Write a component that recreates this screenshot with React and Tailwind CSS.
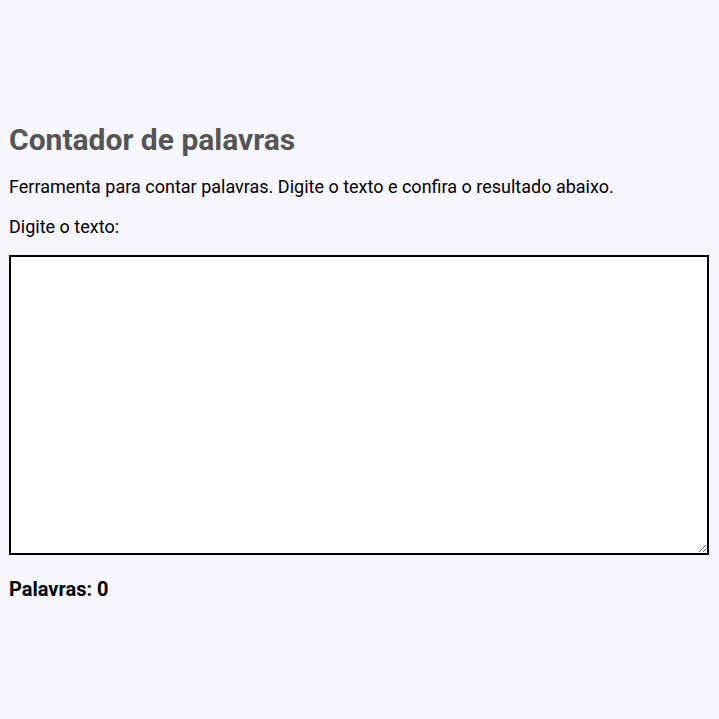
import React, { useState } from "react";

export default function App() {
  const [text, setText] = useState("");
  const words = text.trim() ? text.trim().split(/\s+/).length : 0;

  return (
    <main className="min-h-screen bg-[#f8f6fe] px-[9px] pt-[122px] font-['Roboto',sans-serif] text-black">
      <h2 className="text-[30px] leading-[36px] font-bold text-[#555555]">
        Contador de palavras
      </h2>
      <p className="mt-[18px] text-[18px] leading-[21px]">
        Ferramenta para contar palavras. Digite o texto e confira o resultado
        abaixo.
      </p>
      <p className="mt-[19px] text-[18px] leading-[21px]">Digite o texto:</p>
      <textarea
        autoFocus
        value={text}
        onChange={(e) => setText(e.target.value)}
        className="mt-[18px] block h-[300px] w-[700px] border-2 border-black bg-white p-[2px] text-[18px] outline-none"
      />
      <p className="mt-[22px] text-[20px] leading-[24px] font-bold">
        Palavras: {words}
      </p>
    </main>
  );
}
